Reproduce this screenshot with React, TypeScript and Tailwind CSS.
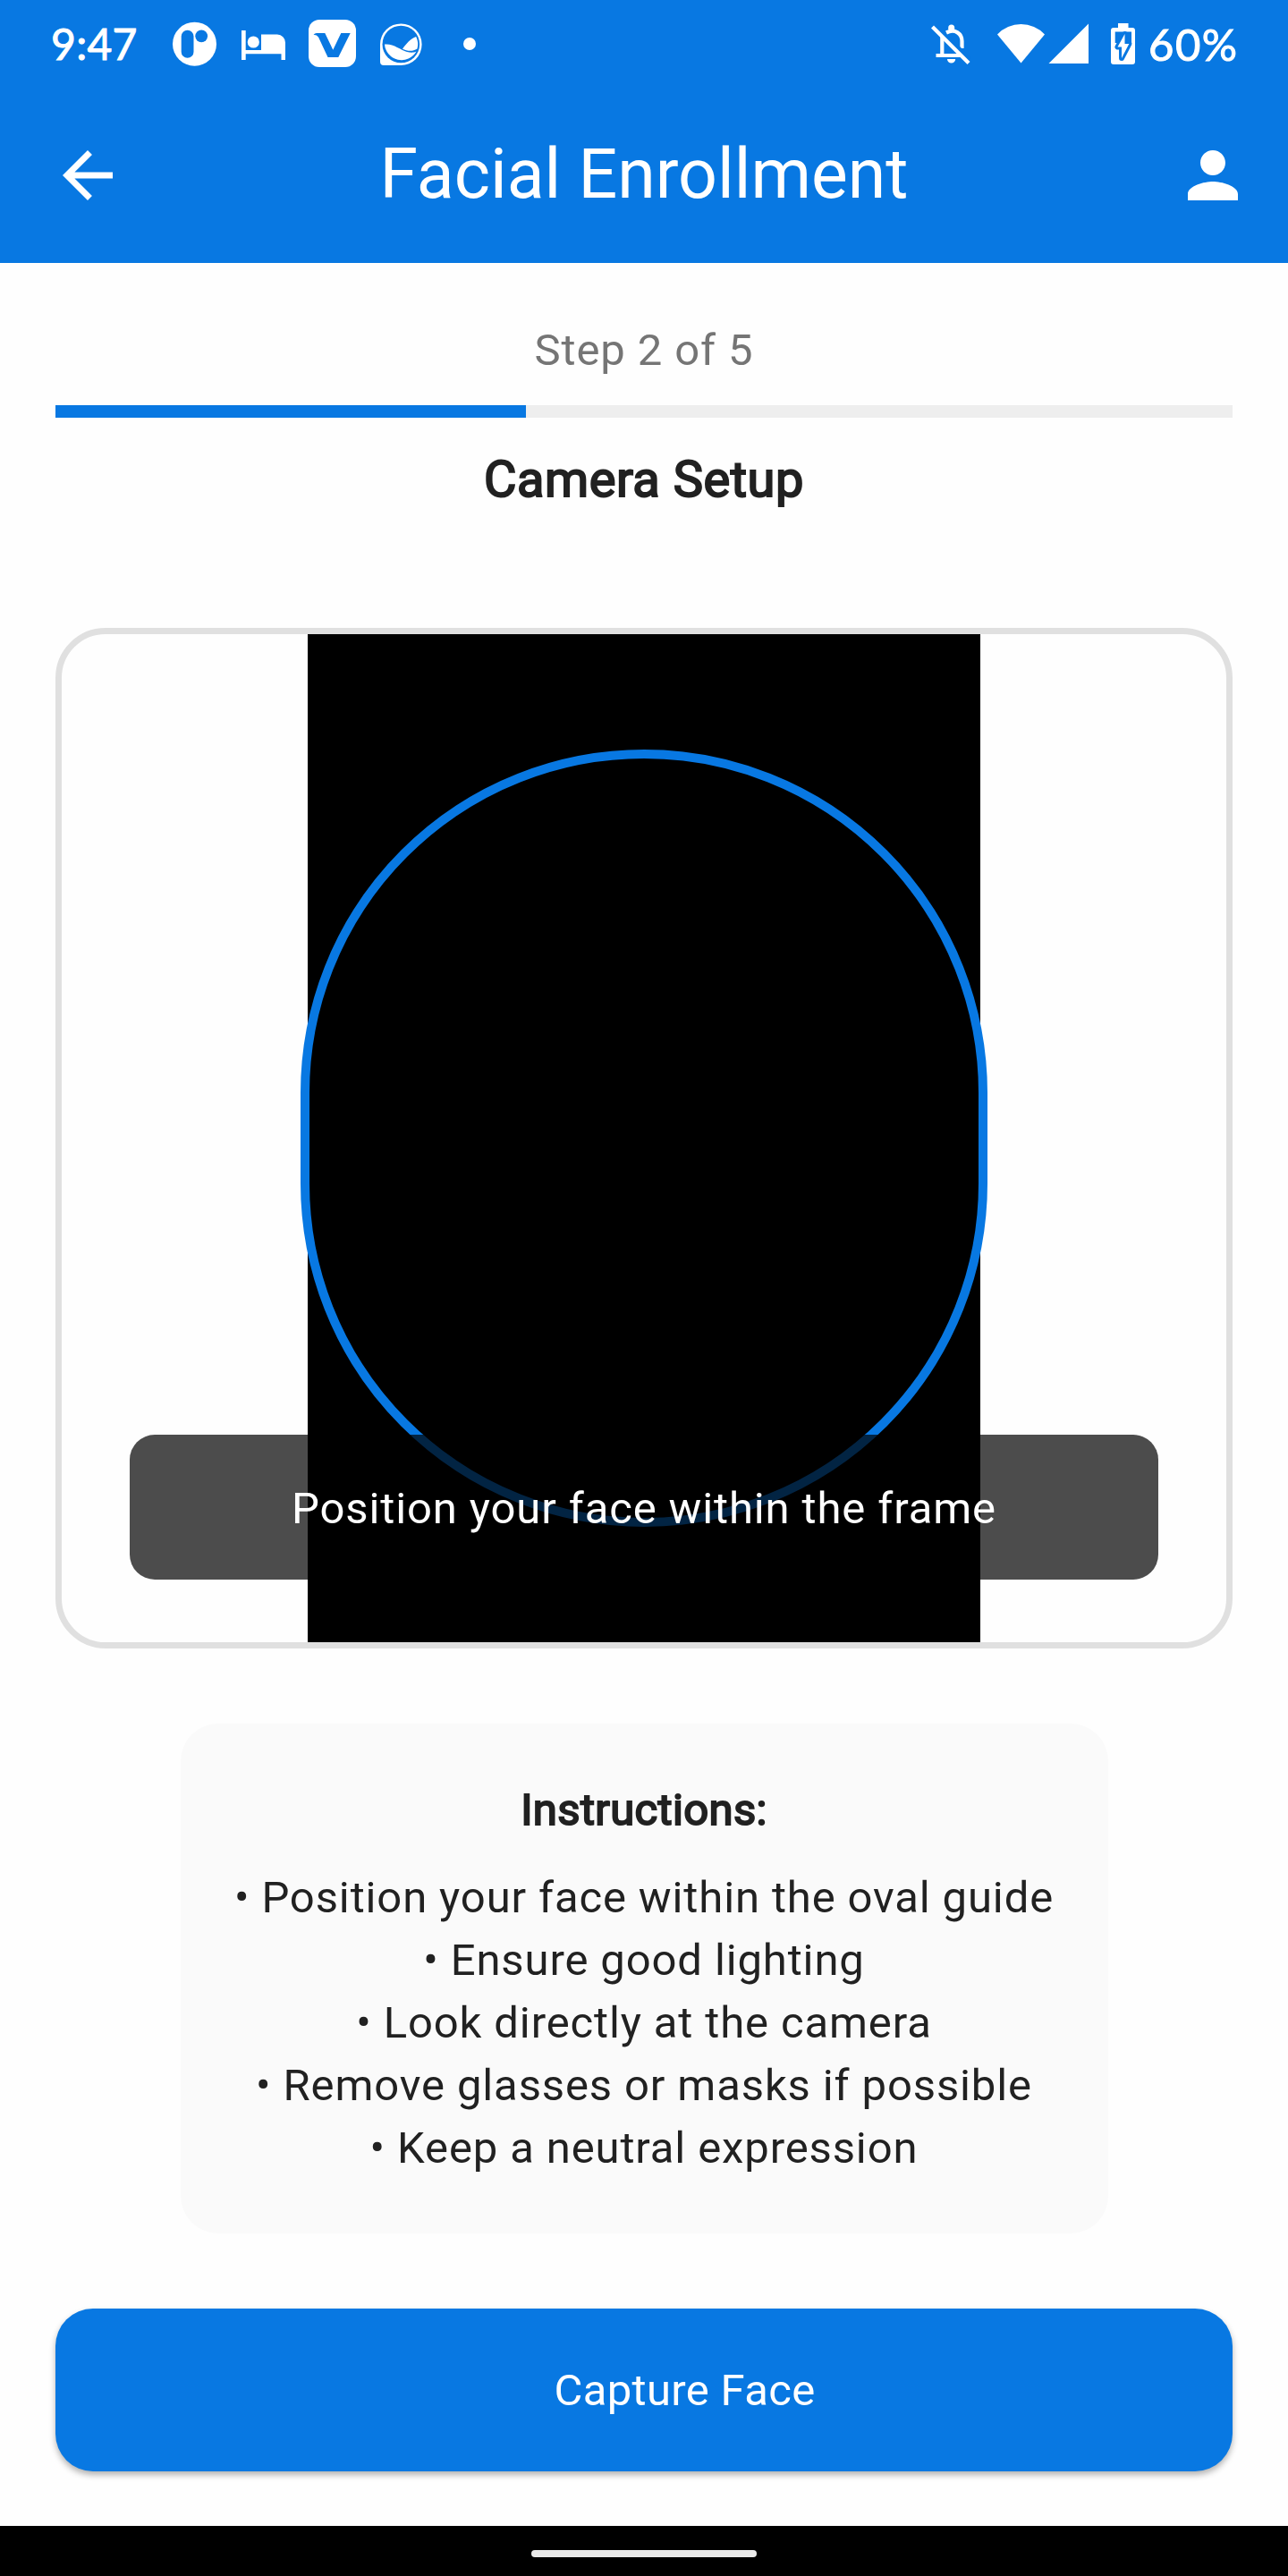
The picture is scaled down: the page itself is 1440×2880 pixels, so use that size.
import React from "react";

const instructions = [
  "Position your face within the oval guide",
  "Ensure good lighting",
  "Look directly at the camera",
  "Remove glasses or masks if possible",
  "Keep a neutral expression",
];

function CircleLogoIcon() {
  return (
    <svg className="ml-[40px] h-[50px] w-[50px]" viewBox="0 0 50 50">
      <circle cx="24.500" cy="25.200" r="24.500" fill="#fff" />
      <rect x="9.700" y="9.800" width="13.800" height="31" rx="6.900" fill="#0878e2" />
      <circle cx="32.200" cy="16.300" r="6.900" fill="#0878e2" />
    </svg>
  );
}

function BedIcon() {
  return (
    <svg className="mt-[3px] ml-[27px] h-[34px] w-[49px]" viewBox="0 0 49 34" fill="#fff">
      <path d="M0 0h4.700v22h17.300V4.500H40a9 9 0 0 1 9 9V33h-4.500v-6.700H4.700V33H0z" />
      <circle cx="13.300" cy="13" r="6.600" />
    </svg>
  );
}

function VIcon() {
  return (
    <svg className="ml-[26px] h-[54px] w-[54px]" viewBox="0 0 54 54">
      <rect x="0" y="0" width="53" height="53" rx="12" fill="#fff" />
      <path d="M5.500 16.700Q7 15 9 15H18.300L27.300 33.700 36.300 15H46.700L33.300 42H21.500L11 19.500Q9.500 17 5.500 16.700z" fill="#0878e2" />
    </svg>
  );
}

function WaveIcon() {
  return (
    <svg className="mt-[1px] ml-[26px] h-[48px] w-[48px]" viewBox="0 0 48 48">
      <path d="M0 23.500A23.300 23.300 0 1 1 23.300 47H4a4 4 0 0 1-4-4z" fill="#fff" />
      <circle cx="23.300" cy="23.500" r="20.800" fill="#0878e2" />
      <path d="M5 23.500C15 22.500 22 29.500 30 32 34 33 38 33 40.500 31.500A19 19 0 0 1 5 23.500z" fill="#fff" />
      <path d="M25 28.700C29 23 34 17 40.200 15A19 19 0 0 1 41.500 28.500C36 32 30 31 25 28.700z" fill="#fff" />
    </svg>
  );
}

function BellOffIcon() {
  return (
    <svg className="h-[46px] w-[46px]" viewBox="0 0 46 46" fill="none" stroke="#fff" strokeWidth="4.200">
      <path d="M12.300 15V36M5.500 36H34M17 10.500C27 5.500 34.500 12 34.500 20V28" />
      <path d="M20 16L44 40" stroke="#0878e2" strokeWidth="3" />
      <path d="M1.500 4L42 44.500" />
      <path d="M19.200 7V5a3.500 3.500 0 0 1 7 0v2zM18 40h9.200a4.600 4.600 0 0 1-9.200 0z" fill="#fff" stroke="none" />
    </svg>
  );
}

function BatteryIcon() {
  return (
    <svg className="ml-[24px] h-[46px] w-[27px]" viewBox="0 0 27 46">
      <path d="M8 0H19.500V5H24a3 3 0 0 1 3 3V43a3 3 0 0 1-3 3H3a3 3 0 0 1-3-3V8a3 3 0 0 1 3-3H8z" fill="#fff" />
      <path d="M4.700 9.500H23V22H4.700z" fill="#0878e2" />
      <path
        d="M15.500 12L7.500 26.500H12V39L20.300 23H15.500z"
        fill="#fff"
        stroke="#0878e2"
        strokeWidth="6"
        strokeLinejoin="round"
        paintOrder="stroke"
      />
    </svg>
  );
}

function StatusBar() {
  return (
    <div className="flex h-[98px] items-center pl-[57px] pr-[55px]">
      <span className="w-[96px] whitespace-nowrap font-['Lato'] text-[48px] font-normal leading-none tracking-[0.3px] [-webkit-text-stroke:1px_white]">9:47</span>
      <CircleLogoIcon />
      <BedIcon />
      <VIcon />
      <WaveIcon />
      <span className="ml-[45px] h-[14px] w-[14px] rounded-full bg-white" />
      <span className="grow" />
      <BellOffIcon />
      <svg className="ml-[28px] h-[46px] w-[103px]" viewBox="0 0 103 46" fill="#fff">
        <path d="M0 12.500A36.500 36.500 0 0 1 53 12.500L26.500 44.500z" />
        <path d="M57.500 45L102 0.500V45z" />
      </svg>
      <BatteryIcon />
      <span className="ml-[15px] w-[101px] whitespace-nowrap font-['Lato'] text-[49px] font-normal leading-none tracking-[1.5px] [-webkit-text-stroke:1px_white]">60%</span>
    </div>
  );
}

export default function App() {
  return (
    <div className="flex h-[2880px] w-[1440px] flex-col overflow-hidden bg-[#fefefe] font-['Roboto',sans-serif] text-[49px] leading-[70px] text-[#212121]">
      <header className="h-[294px] bg-[#0878e2] text-white">
        <StatusBar />
        <div className="flex h-[196px] items-center justify-between pl-[56px] pr-[42px]">
          <svg className="h-[84px] w-[84px]" viewBox="0 0 24 24" fill="currentColor">
            <path d="M20 11H7.830l5.590-5.590L12 4l-8 8 8 8 1.410-1.410L7.830 13H20v-2z" />
          </svg>
          <h1 className="pr-[14px] pb-[3px] text-[77px] leading-[98px]">Facial Enrollment</h1>
          <svg className="h-[84px] w-[84px]" viewBox="0 0 24 24" fill="currentColor">
            <path d="M12 12c2.210 0 4-1.790 4-4s-1.790-4-4-4-4 1.790-4 4 1.790 4 4 4zm0 2c-2.670 0-8 1.340-8 4v2h16v-2c0-2.660-5.330-4-8-4z" />
          </svg>
        </div>
      </header>
      <main className="flex h-[2530px] flex-col px-[62px] pt-[63px]">
        <p className="text-center tracking-[0.875px] text-[#757575]">Step 2 of 5</p>
        <div className="mt-[26px] h-[14px] bg-[#eeeeee]">
          <div className="h-full w-2/5 bg-[#0878e2]" />
        </div>
        <h2 className="mt-[27px] text-center text-[56px] leading-[84px] tracking-[0.525px] [-webkit-text-stroke:2px_#212121]">Camera Setup</h2>
        <section className="relative mt-[124px] flex h-[1141px] shrink-0 justify-center overflow-hidden rounded-[56px] border-[7px] border-[#e0e0e0]">
          <div className="h-full w-[752px] bg-black" />
          <div className="absolute left-[267px] top-[129px] h-[869px] w-[768px] rounded-[384px] border-[10.5px] border-[#0878e2]" />
          <div className="absolute left-[76px] right-[76px] top-[895px] flex h-[162px] items-center justify-center rounded-[28px] bg-black/70 pt-[3px] tracking-[0.875px] text-white">
            Position your face within the frame
          </div>
        </section>
        <section className="mt-[84px] h-[570px] w-[1037px] self-center rounded-[42px] bg-[#fafafa] pt-[62px] text-center">
          <h3 className="mb-[28px] tracking-[0.35px] [-webkit-text-stroke:2px_#212121]">Instructions:</h3>
          <ul className="tracking-[0.875px]">
            {instructions.map((line) => (
              <li key={line}>• {line}</li>
            ))}
          </ul>
        </section>
        <button className="mt-[84px] flex h-[182px] shrink-0 items-center justify-center rounded-[42px] bg-[#0878e2] pt-[2px] pl-[91px] tracking-[0.35px] text-white shadow-[0_4px_7px_rgba(0,0,0,0.3)]">
          Capture Face
        </button>
      </main>
      <footer className="flex h-14 items-center justify-center bg-black pt-[6px]">
        <div className="h-2 w-[252px] rounded-full bg-[#eaeaea]" />
      </footer>
    </div>
  );
}
